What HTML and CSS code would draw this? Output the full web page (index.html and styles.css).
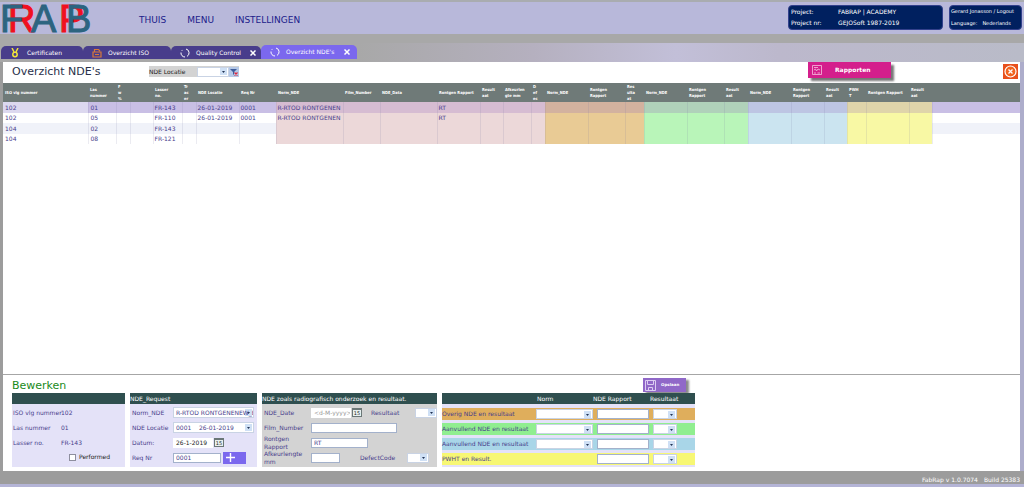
FILE: index.html
```html
<!DOCTYPE html>
<html lang="nl">
<head>
<meta charset="utf-8">
<title>FabRap - Overzicht NDE's</title>
<link rel="stylesheet" href="styles.css">
</head>
<body>
<header class="top">
  <svg class="logo" width="95" height="31" viewBox="0 0 95 31" role="img" aria-label="FRAPB">
    <g font-family="Liberation Sans, sans-serif" font-size="38">
      <text x="8" y="27" class="red">R</text>
      <text x="59" y="27" class="red">P</text>
      <text x="0" y="27" class="teal">F</text>
      <text x="31" y="27" class="teal">A</text>
      <text x="66" y="27" class="teal">B</text>
    </g>
  </svg>
  <nav class="nav">
    <a href="#">THUIS</a><a href="#">MENU</a><a href="#">INSTELLINGEN</a>
  </nav>
  <dl class="badge project">
    <dt>Project:</dt><dd>FABRAP | ACADEMY</dd>
    <dt>Project nr:</dt><dd>GEJOSoft 1987-2019</dd>
  </dl>
  <div class="badge user">
    <a href="#">Gerard Jonasson / Logout</a>
    <p><span>Language:</span><span>Nederlands</span></p>
  </div>
</header>

<nav class="tabs">
  <a class="tab first" href="#"><svg width="8" height="10" viewBox="0 0 8 10" fill="none" stroke="#f2e63a" stroke-width="1.5"><path d="M1 0l2 4M7 0l-2 4"/><circle cx="4" cy="6.5" r="2.2"/></svg>Certificaten</a>
  <a class="tab iso" href="#"><svg width="10" height="10" viewBox="0 0 10 10" fill="none" stroke="#d9793a" stroke-width="1.2"><path d="M1 4h8v5H1zM2.500 4V1.500h4L8 3M3 6.500h4" /></svg>Overzicht ISO</a>
  <a class="tab quality" href="#"><svg width="10" height="10" viewBox="0 0 10 10" fill="none" stroke="#fff"><path d="M6 1a4 4 0 0 1 1 7.400M5 9A4 4 0 0 1 1 4.500" /><path d="M1.500 3l1.500-1.500" stroke-dasharray="1 1"/></svg>Quality Control<svg class="x" width="6" height="6" viewBox="0 0 6 6"><path d="M.5.500l5 5M5.500.500l-5 5" stroke="#fff" stroke-width="1.500"/></svg></a>
  <a class="tab active" href="#"><svg width="10" height="10" viewBox="0 0 10 10" fill="none" stroke="#fff"><path d="M6 1a4 4 0 0 1 1 7.400M5 9A4 4 0 0 1 1 4.500" /><path d="M1.500 3l1.500-1.500" stroke-dasharray="1 1"/></svg>Overzicht NDE's<svg class="x" width="6" height="6" viewBox="0 0 6 6"><path d="M.5.500l5 5M5.500.500l-5 5" stroke="#fff" stroke-width="1.500"/></svg></a>
</nav>

<main class="panel">
  <section class="toolbar">
    <h1>Overzicht NDE's</h1>
    <div class="filter">
      <label for="loc">NDE Locatie</label>
      <select id="loc"><option></option></select>
      <button class="funnel" aria-label="Filter wissen"><svg width="8" height="8" viewBox="0 0 8 8"><path d="M0 1h7L4 4v3L3 6V4z" fill="#3e5d9c"/><path d="M4.500 4.500l3 3M7.500 4.500l-3 3" stroke="#e0263a" stroke-width="1.200"/></svg></button>
    </div>
    <button class="report"><svg width="10" height="10" viewBox="0 0 10 10" fill="none" stroke="#f8bfe0" stroke-width=".8"><path d="M.5.500h9v9h-9zM2 2.500h4M2 5l1.500-1 1 2 1.500-2L8 5M2 8h2M5.500 8H8"/></svg>Rapporten</button>
    <button class="close" aria-label="Sluiten"><svg width="15" height="15" viewBox="0 0 15 15"><path d="M0 0h15v15H0z" fill="#e8501c"/><circle cx="7.500" cy="7.500" r="5.500" fill="#f2641e" stroke="#fff" stroke-width="1.200"/><path d="M5.500 5.500l4 4M9.500 5.500l-4 4" stroke="#fff" stroke-width="1.300"/></svg></button>
  </section>

  <section class="grid-area">
    <table class="grid">
      <colgroup>
        <col class="w85"><col class="w28"><col class="w14"><col class="w23"><col class="w29"><col class="w14"><col class="w43"><col class="w37">
        <col class="w67 pink"><col class="w37 pink"><col class="w57 pink"><col class="w43 pink"><col class="w23 pink"><col class="w28 pink"><col class="w14 pink">
        <col class="w43 orange"><col class="w37 orange"><col class="w19 orange">
        <col class="w43 green"><col class="w37 green"><col class="w24 green">
        <col class="w43 blue"><col class="w33 blue"><col class="w23 blue">
        <col class="w19 yellow"><col class="w43 yellow"><col class="w23 yellow"><col>
      </colgroup>
      <thead>
        <tr><th>ISO vlg nummer</th><th>Las<br>nummer</th><th>F<br>w<br>%</th><th></th><th>Lasser<br>no.</th><th>Tr<br>ac<br>er</th><th>NDE Locatie</th><th>Req Nr</th><th>Norm_NDE</th><th>Film_Number</th><th>NDE_Data</th><th>Rontgen Rapport</th><th>Result<br>aat</th><th>Afkeurlen<br>gte mm</th><th>D<br>ef<br>ec</th><th>Norm_NDE</th><th>Rontgen<br>Rapport</th><th>Res<br>ulta<br>at</th><th>Norm_NDE</th><th>Rontgen<br>Rapport</th><th>Result<br>aat</th><th>Norm_NDE</th><th>Rontgen<br>Rapport</th><th>Result<br>aat</th><th>PWH<br>T</th><th>Rontgen Rapport</th><th>Result<br>aat</th><th></th></tr>
      </thead>
      <tbody>
        <tr class="selected"><td>102</td><td>01</td><td></td><td></td><td>FR-143</td><td></td><td>26-01-2019</td><td>0001</td><td>R-RTOD RONTGENEN</td><td></td><td></td><td>RT</td><td></td><td></td><td></td><td></td><td></td><td></td><td></td><td></td><td></td><td></td><td></td><td></td><td></td><td></td><td></td><td></td></tr>
        <tr><td>102</td><td>05</td><td></td><td></td><td>FR-110</td><td></td><td>26-01-2019</td><td>0001</td><td>R-RTOD RONTGENEN</td><td></td><td></td><td>RT</td><td></td><td></td><td></td><td></td><td></td><td></td><td></td><td></td><td></td><td></td><td></td><td></td><td></td><td></td><td></td><td></td></tr>
        <tr class="alt"><td>104</td><td>02</td><td></td><td></td><td>FR-143</td><td></td><td></td><td></td><td></td><td></td><td></td><td></td><td></td><td></td><td></td><td></td><td></td><td></td><td></td><td></td><td></td><td></td><td></td><td></td><td></td><td></td><td></td><td></td></tr>
        <tr><td>104</td><td>08</td><td></td><td></td><td>FR-121</td><td></td><td></td><td></td><td></td><td></td><td></td><td></td><td></td><td></td><td></td><td></td><td></td><td></td><td></td><td></td><td></td><td></td><td></td><td></td><td></td><td></td><td></td><td></td></tr>
      </tbody>
    </table>
  </section>

  <section class="edit">
    <div class="edit-head">
      <h2>Bewerken</h2>
      <button class="save"><svg width="11" height="11" viewBox="0 0 11 11" fill="none" stroke="#dccdf2"><path d="M.5.500h10v10h-10zM2.500.500v4h6v-4M3.500 10.500v-3h4v3"/></svg>Opslaan</button>
    </div>
    <div class="cards">
      <section class="card info">
        <h3></h3>
        <dl>
          <dt>ISO vlg nummer</dt><dd>102</dd>
          <dt>Las nummer</dt><dd>01</dd>
          <dt>Lasser no.</dt><dd>FR-143</dd>
        </dl>
        <label class="check"><input type="checkbox">Performed</label>
      </section>

      <section class="card request">
        <h3>NDE_Request</h3>
        <div class="fields">
          <label for="norm">Norm_NDE</label><select id="norm"><option>R-RTOD RONTGENENEW_EN</option></select>
          <label for="ndeloc">NDE Locatie</label><select id="ndeloc"><option>0001 &nbsp;&nbsp; 26-01-2019</option></select>
          <label for="datum">Datum:</label><div class="line"><input id="datum" class="date plain" value="26-1-2019"><button class="cal" aria-label="Kalender">15</button></div>
          <label for="req">Req Nr</label><div class="line"><input id="req" class="req" value="0001"><button class="plus" aria-label="Toevoegen"><svg width="22" height="11" viewBox="0 0 22 11"><path d="M7.500 1v9M3 5.500h9" stroke="#fff" stroke-width="1.400"/></svg></button></div>
        </div>
      </section>

      <section class="card radio">
        <h3>NDE zoals radiografisch onderzoek en resultaat.</h3>
        <div class="fields">
          <label for="nded">NDE_Date</label><div class="line"><input id="nded" class="date plain" placeholder="&lt;d-M-yyyy&gt;"><button class="cal" aria-label="Kalender">15</button><label class="mid" for="res">Resultaat</label><select id="res" class="short end"><option></option></select></div>
          <label for="film">Film_Number</label><div class="line"><input id="film" class="film"></div>
          <label for="rap">Rontgen Rapport</label><div class="line"><input id="rap" class="rap" value="RT"></div>
          <label for="afk">Afkeurlengte mm</label><div class="line"><input id="afk" class="afk"><label class="defect" for="def">DefectCode</label><select id="def" class="short"><option></option></select></div>
        </div>
      </section>

      <section class="card extra">
        <h3><span></span><span>Norm</span><span>NDE Rapport</span><span>Resultaat</span></h3>
        <div class="xrow orange"><span>Overig NDE en resultaat</span><select aria-label="Norm"><option></option></select><input aria-label="NDE Rapport"><select aria-label="Resultaat"><option></option></select></div>
        <div class="xrow green"><span>Aanvullend NDE en resultaat</span><select aria-label="Norm"><option></option></select><input aria-label="NDE Rapport"><select aria-label="Resultaat"><option></option></select></div>
        <div class="xrow blue"><span>Aanvullend NDE en resultaat</span><select aria-label="Norm"><option></option></select><input aria-label="NDE Rapport"><select aria-label="Resultaat"><option></option></select></div>
        <div class="xrow yellow"><span>PWHT en Result.</span><i></i><input aria-label="NDE Rapport"><select aria-label="Resultaat"><option></option></select></div>
      </section>
    </div>
  </section>
</main>

<footer class="foot"><span>FabRap v 1.0.7074</span><span>Build 25383</span></footer>
</body>
</html>
```
FILE: styles.css
```css
* { box-sizing: border-box; }
body {
  margin: 0;
  min-height: 100vh;
  display: flex;
  flex-direction: column;
  background: #9c9c9c;
  border-bottom: 3px solid #b4b4d6;
  font: 6px/8px "DejaVu Sans", Verdana, sans-serif;
  color: #483d8b;
}
h1, h2, h3, p, dl, dd { margin: 0; font-weight: normal; }
a { color: inherit; text-decoration: none; }
button, input, select { font: inherit; color: inherit; margin: 0; padding: 0; border: 0; border-radius: 0; }
svg { display: block; flex: none; }

.top {
  display: flex;
  align-items: flex-start;
  height: 34px;
  padding: 3px 2px 0 0;
  border-top: 2px solid #a9acb0;
  background: #b8b8da;
}
.logo { overflow: visible; stroke-width: 1; }
.logo .red { fill: #f01020; stroke: #f01020; }
.logo .teal { fill: #2c6480; stroke: #2c6480; }
.nav {
  display: flex;
  gap: 21px;
  flex: 1;
  padding: 9px 0 0 44px;
  font-size: 9px;
  line-height: 12px;
  color: #20208a;
}
.badge {
  height: 25px;
  background: #00205f;
  border: 1px solid #33418c;
  border-radius: 4px;
  color: #fff;
}
.project { width: 155px; display: grid; grid-template-columns: 47px 1fr; row-gap: 3px; padding: 2px; }
.user { width: 73px; margin-left: 6px; padding: 1px; font: 5px/8px "DejaVu Sans", sans-serif; white-space: nowrap; }
.user p { display: flex; gap: 5px; margin-top: 4px; }

.tabs {
  display: flex;
  align-items: flex-end;
  height: 28px;
  padding: 0 0 3px 1px;
  background:
    linear-gradient(#a8a8a8, #a8a8a8) top / 100% 9px no-repeat,
    linear-gradient(90deg, #a8a8a8 35%, #b5b0bf 52%, #c2bfd8 66%, #bcb8cc 76%, #b9bbc8);
}
.tab {
  display: flex;
  align-items: center;
  gap: 6px;
  width: 88px;
  height: 13px;
  padding-left: 9px;
  background: #483d8b;
  border-radius: 5px 5px 0 0;
  color: #fff;
  white-space: nowrap;
}
.first { width: 82px; padding-left: 10px; gap: 8px; }
.quality { width: 90px; }
.active { width: 96px; height: 14px; background: #7b68ee; }
.x { margin: 0 5px 0 auto; }
.active .x { margin-right: 7px; }

.panel {
  flex: 1;
  display: flex;
  flex-direction: column;
  margin-left: 3px;
  background: #fff;
  border-right: 4px solid #adadcb;
}
.toolbar { display: flex; align-items: flex-start; height: 21px; padding: 0 2px 0 9px; }
h1 { width: 137px; font-size: 11px; line-height: 20px; color: #28304a; }
.filter { display: flex; align-items: center; height: 11px; margin-top: 4px; background: #d3d3d3; color: #222; }
.filter label { width: 48px; }
.filter select { width: 32px; height: 10px; }
.funnel { width: 10px; background: #b5c9e8; padding: 1px; }
.report {
  display: flex;
  align-items: center;
  width: 83px;
  height: 16px;
  margin: 0 112px 0 auto;
  padding-left: 4px;
  background: #d41f8c;
  box-shadow: 3px 3px 2px #777;
  color: #fff;
  font-weight: bold;
}
.report svg { margin-right: 13px; }
.close { margin-top: 2px; background: none; }

.grid-area { flex: 1; border-bottom: 1px solid #a6a6a6; }
.grid { width: 100%; table-layout: fixed; border-collapse: collapse; }
.grid thead { background: #6f7a78; }
.grid th { height: 19px; padding: 0 2px; text-align: left; font: bold 4px/6px "DejaVu Sans Condensed", "DejaVu Sans", sans-serif; color: #fff; white-space: nowrap; }
.grid td { height: 10px; padding: 0 1px; line-height: 10px; white-space: nowrap; border-right: 1px solid rgb(120 120 160 / 15%); }
.grid tr:nth-child(odd) td { height: 11px; }
.grid td:last-child { border-right: 0; }
.grid td:nth-child(-n+2), .grid th:first-child { padding-left: 2px; }
.selected td { background: rgb(150 110 190 / 26%); }
.selected td:nth-child(-n+8), .selected td:last-child { background: #c9bfe5; }
.grid .selected td:first-child { background: #dcd8ef; }
.alt td:nth-child(-n+8), .alt td:last-child { background: #f0f2f9; }
.w14 { width: 14px; } .w19 { width: 19px; } .w23 { width: 23px; } .w24 { width: 24px; }
.w28 { width: 28px; } .w29 { width: 29px; } .w33 { width: 33px; } .w37 { width: 37px; }
.w43 { width: 43px; } .w57 { width: 57px; } .w67 { width: 67px; } .w85 { width: 85px; }
col.pink { background: #ecd8d9; }
col.orange { background: #e9cb95; }
col.green { background: #b9f5b9; }
col.blue { background: #cbe4f0; }
col.yellow { background: #f8f8a4; }

.edit { padding: 3px 9px 4px; }
.edit-head { display: flex; width: 674px; height: 15px; }
h2 { flex: 1; font-size: 11px; line-height: 15px; color: #1a8a1a; }
.save {
  display: flex;
  align-items: center;
  gap: 5px;
  width: 43px;
  height: 14px;
  padding-left: 2px;
  background: #9068c8;
  box-shadow: 3px 2px 2px #8a8a8a;
  color: #fff;
  font: bold 4px/8px "DejaVu Sans", sans-serif;
}
.cards { display: flex; gap: 5px; }
.card { height: 74px; background: #e4e2f8; }
h3 { height: 11px; background: #2f4f4f; color: #fff; font-size: 6px; line-height: 11px; white-space: nowrap; }
.info { width: 113px; }
.info dl { display: grid; grid-template: repeat(3, 15px) / 48px 1fr; align-items: center; padding: 1px 1px 0; white-space: nowrap; }
.check { display: flex; align-items: center; gap: 3px; height: 14px; margin-left: 57px; color: #222; }
.check input { appearance: none; width: 7px; height: 7px; background: #fff; border: 1px solid #8e8e9e; }
.request { width: 127px; }
.fields { display: grid; grid-template: repeat(4, 15px) / 41px 1fr; align-items: center; padding: 1px 2px; }
.line { display: flex; align-items: center; }
input, select { height: 10px; background: #fff; border: 1px solid #a3b1cb; padding-left: 2px; }
select {
  appearance: none;
  border-color: #c9d3e4;
  background: #fff url("data:image/svg+xml,%3Csvg xmlns='http://www.w3.org/2000/svg' width='7' height='7'%3E%3Cpath d='M0 0h7v7H0z' fill='%23cfe0f5'/%3E%3Cpath d='M2 3h3L3.500 5z' fill='%23223355'/%3E%3C/svg%3E") right 1px center no-repeat;
}
.request select { width: 81px; height: 11px; }
.plain { border-color: #fff; }
.date { width: 40px; color: #222; }
.date::placeholder { color: #999; opacity: 1; }
.cal { width: 10px; height: 9px; margin-left: 1px; border: 1px solid #6b7777; border-top-width: 2px; background: #e8f0f0; color: #222; font: 5px/6px "DejaVu Sans", sans-serif; }
.req { width: 48px; }
.plus { width: 23px; height: 12px; margin-left: 2px; background: #7b68ee; }
.radio { width: 175px; background: #d3d3d3; }
.radio .fields { grid-template-columns: 47px 1fr; padding-right: 0; }
.mid { margin-left: 9px; }
.short { width: 22px; }
.end { margin-left: auto; }
.film { width: 86px; }
.rap { width: 57px; }
.afk { width: 29px; }
.defect { width: 47px; margin-left: 20px; }
.extra { width: 253px; }
.extra h3 { display: grid; grid-template-columns: 95px 56px 57px 1fr; }
.xrow { display: grid; grid-template-columns: 90px 57px 52px 1fr; column-gap: 4px; align-items: center; }
.xrow { height: 12px; margin-top: 4px; white-space: nowrap; }
.xrow + .xrow { margin-top: 3px; }
.xrow select:last-child { width: 24px; }
.xrow.orange { background: #dfae5c; }
.xrow.green { background: #90ee90; }
.xrow.blue { background: #a9d6e8; }
.xrow.yellow { background: #f7f774; }

.foot { display: flex; justify-content: flex-end; gap: 6px; height: 13px; padding: 5px 4px 0 0; color: #fff; }
```
